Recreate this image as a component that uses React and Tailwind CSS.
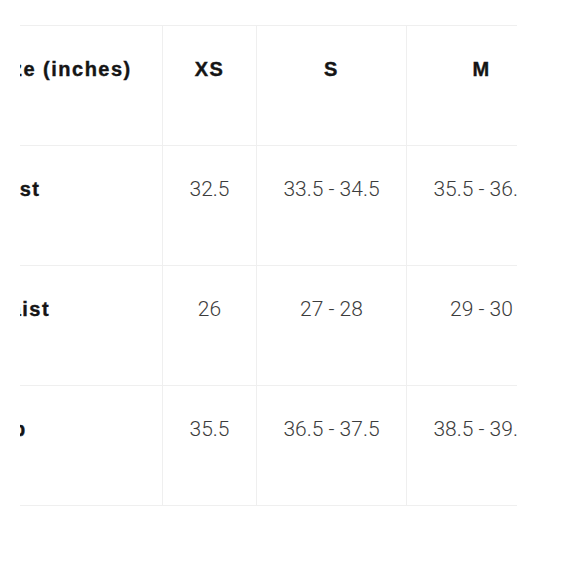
const rows = [
  { label: "Size (inches)", head: true, cells: ["XS", "S", "M"] },
  { label: "Bust", cells: ["32.5", "33.5 - 34.5", "35.5 - 36.5"] },
  { label: "Waist", cells: ["26", "27 - 28", "29 - 30"] },
  { label: "Hip", cells: ["35.5", "36.5 - 37.5", "38.5 - 39.5"] },
];

const widths = ["w-[94px]", "w-[150px]", "w-[150px]"];

export default function App() {
  return (
    <div className="w-[580px] h-[580px] bg-white pt-[25px] pl-[20px] font-['Roboto',sans-serif]">
      <div className="w-[497px] overflow-hidden">
        <div className="-ml-[40px] w-max">
          {rows.map((row, i) => (
            <div
              key={row.label}
              className={
                "flex border-t border-[#efefef] " +
                (i === rows.length - 1 ? "h-[121px] border-b" : "h-[120px]")
              }
            >
              <div className="w-[182px] shrink-0 pl-[10px] pt-[31px] whitespace-nowrap font-['Liberation_Sans',sans-serif] text-[20px] leading-[24px] font-bold tracking-[1.5px] text-[#151515] [-webkit-text-stroke:0.4px_#151515]">
                {row.label}
              </div>
              {row.cells.map((c, j) => (
                <div
                  key={j}
                  className={
                    widths[j] +
                    " shrink-0 border-l border-[#efefef] pt-[31px] text-center whitespace-nowrap leading-[24px] " +
                    (row.head
                      ? "font-['Liberation_Sans',sans-serif] text-[20px] font-bold tracking-[1.5px] text-[#151515] [-webkit-text-stroke:0.4px_#151515]"
                      : "text-[21px] font-light text-[#3c3c3c]")
                  }
                >
                  {c}
                </div>
              ))}
            </div>
          ))}
        </div>
      </div>
    </div>
  );
}
